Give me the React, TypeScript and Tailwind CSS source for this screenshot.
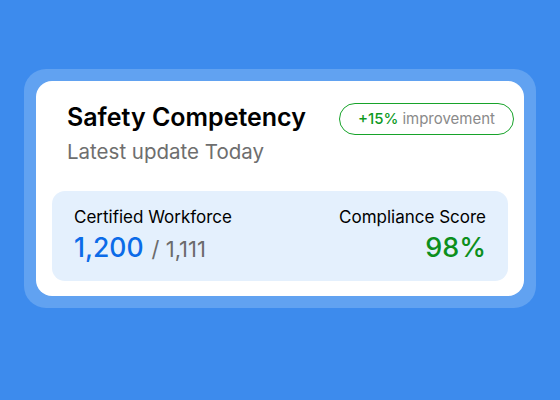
export default function App() {
  return (
    <div className="w-[560px] h-[400px] bg-[#3d8bed] pt-[69px] pl-[24px]" style={{ fontFamily: 'Inter, "Noto Sans", sans-serif' }}>
      <div className="w-[512px] rounded-[22px] bg-[#61a2f1] p-[12px]">
        <div className="h-[215px] rounded-[16px] bg-white px-[16px] pb-[15px] pt-[20px] flex flex-col">
          <div className="flex items-start justify-between pl-[15px]">
            <div>
              <h2 className="text-[25px] leading-[32px] font-semibold text-black">Safety Competency</h2>
              <p className="mt-[6px] text-[20.5px] leading-[26px] text-[#6e6e6e]">Latest update Today</p>
            </div>
            <span className="-mr-[6px] mt-[2px] h-[32px] rounded-full border border-[#17a32a] px-[18px] flex items-center text-[15px]">
              <span className="text-[#0e9a1f] font-medium">+15%</span>
              <span className="ml-[4px] text-[#8a8a8a]">improvement</span>
            </span>
          </div>
          <div className="mt-auto h-[90px] rounded-[13px] bg-[#e4f0fd] px-[22px] pt-[15px] flex justify-between">
            <div>
              <div className="text-[17px] leading-[22px] text-black">Certified Workforce</div>
              <div className="flex items-baseline">
                <span className="text-[26.5px] leading-[39px] font-medium text-[#0b6be8]">1,200</span>
                <span className="ml-[8px] text-[22px] text-[#6b6b6b]">/ 1,111</span>
              </div>
            </div>
            <div className="text-right">
              <div className="text-[17px] leading-[22px] text-black">Compliance Score</div>
              <div className="text-[27px] leading-[39px] font-medium text-[#0c8f1c]">98%</div>
            </div>
          </div>
        </div>
      </div>
    </div>
  );
}
